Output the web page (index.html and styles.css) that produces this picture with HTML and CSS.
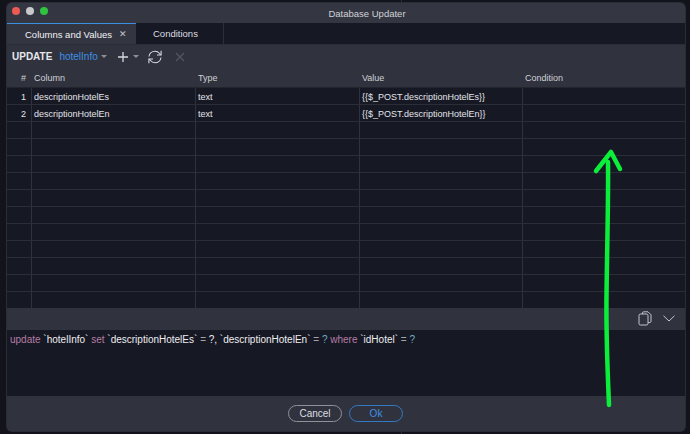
FILE: index.html
```html
<!DOCTYPE html>
<html lang="en">
<head>
    <meta charset="UTF-8">
    <meta name="viewport" content="width=device-width, initial-scale=1.0">
    <link rel="stylesheet" href="styles.css">
    <title>Database Updater</title>
</head>
<body>

<div class="window">
    <div class="titlebar">
        <div class="lights">
            <span class="light red"></span>
            <span class="light grey"></span>
            <span class="light green"></span>
        </div>
        Database Updater
    </div>

    <div class="tabs">
        <div class="tab active">Columns and Values <span class="tab-close">✕</span></div>
        <div class="tab">Conditions</div>
    </div>

    <div class="toolbar">
        <span class="update-label">UPDATE</span>
        <span class="table-name">hotelInfo</span>
        <span class="caret"></span>
        <svg class="tool-plus" width="12" height="12" viewBox="0 0 12 12"><path d="M6 1v10M1 6h10" stroke="#d8d9de" stroke-width="1.3" fill="none"/></svg>
        <span class="caret"></span>
        <svg class="tool-refresh" width="16" height="16" viewBox="0 0 16 16" fill="none" stroke="#d8d9de" stroke-width="1.1">
            <path d="M2 7.5C2.4 4.4 5 2.3 8 2.3c1.900 0 3.400.8 4.500 2.200l1.200 1.300"/>
            <path d="M14.100 1.800v4.200H10"/>
            <path d="M14 8.500c-.4 3.100-3 5.200-6 5.200-1.900 0-3.400-.8-4.500-2.200l-1.200-1.300"/>
            <path d="M1.900 14.200V10H6"/>
        </svg>
        <svg class="tool-delete" width="10" height="10" viewBox="0 0 10 10"><path d="M1 1l8 8M9 1l-8 8" stroke="#555761" stroke-width="1.100" fill="none"/></svg>
    </div>

    <div class="grid">
        <div class="row head">
            <div class="cell num">#</div><div class="cell">Column</div><div class="cell">Type</div><div class="cell">Value</div><div class="cell">Condition</div>
        </div>
        <div class="row">
            <div class="cell num">1</div><div class="cell">descriptionHotelEs</div><div class="cell">text</div><div class="cell">{{$_POST.descriptionHotelEs}}</div><div class="cell"></div>
        </div>
        <div class="row">
            <div class="cell num">2</div><div class="cell">descriptionHotelEn</div><div class="cell">text</div><div class="cell">{{$_POST.descriptionHotelEn}}</div><div class="cell"></div>
        </div>
        <div class="row"><div class="cell num"></div><div class="cell"></div><div class="cell"></div><div class="cell"></div><div class="cell"></div></div>
        <div class="row"><div class="cell num"></div><div class="cell"></div><div class="cell"></div><div class="cell"></div><div class="cell"></div></div>
        <div class="row"><div class="cell num"></div><div class="cell"></div><div class="cell"></div><div class="cell"></div><div class="cell"></div></div>
        <div class="row"><div class="cell num"></div><div class="cell"></div><div class="cell"></div><div class="cell"></div><div class="cell"></div></div>
        <div class="row"><div class="cell num"></div><div class="cell"></div><div class="cell"></div><div class="cell"></div><div class="cell"></div></div>
        <div class="row"><div class="cell num"></div><div class="cell"></div><div class="cell"></div><div class="cell"></div><div class="cell"></div></div>
        <div class="row"><div class="cell num"></div><div class="cell"></div><div class="cell"></div><div class="cell"></div><div class="cell"></div></div>
        <div class="row"><div class="cell num"></div><div class="cell"></div><div class="cell"></div><div class="cell"></div><div class="cell"></div></div>
        <div class="row"><div class="cell num"></div><div class="cell"></div><div class="cell"></div><div class="cell"></div><div class="cell"></div></div>
        <div class="row"><div class="cell num"></div><div class="cell"></div><div class="cell"></div><div class="cell"></div><div class="cell"></div></div>
        <div class="row last"><div class="cell num"></div><div class="cell"></div><div class="cell"></div><div class="cell"></div><div class="cell"></div></div>
    </div>

    <div class="editor-bar">
        <svg width="14" height="15" viewBox="0 0 14 15" fill="none" stroke="#c4c5cb" stroke-width="1">
            <path d="M4.500 3V2a1.200 1.200 0 0 1 1.200-1.200h4.300l3 3v6.500a1.200 1.200 0 0 1-1.200 1.200H10"/>
            <rect x="1" y="3" width="9" height="11" rx="1.500"/>
        </svg>
        <svg width="12" height="7" viewBox="0 0 12 7" fill="none" stroke="#c4c5cb" stroke-width="1"><path d="M.5.800L6 6l5.500-5.200"/></svg>
    </div>

    <div class="editor">
        <span class="kw">update</span> `hotelInfo` <span class="kw">set</span> `descriptionHotelEs` <span class="op">=</span> ?, `descriptionHotelEn` <span class="op">=</span> <span class="q">?</span> <span class="kw">where</span> `idHotel` <span class="op">=</span> <span class="q">?</span>
    </div>

    <div class="footer">
        <button class="btn">Cancel</button>
        <button class="btn btn-ok">Ok</button>
    </div>
</div>

<!-- arrow drawn over the screenshot -->
<svg class="arrow" width="690" height="434" viewBox="0 0 690 434" fill="none" stroke="#0bef3a" stroke-width="4.500" stroke-linecap="round" stroke-linejoin="round">
    <path d="M609 405C608 380 606 340 606.500 297C607 250 608.500 200 608 162"/>
    <path d="M596 171L611 152L620 169"/>
</svg>

</body>
</html>
```

FILE: styles.css
```css
body {
    margin: 0;
    height: 434px;
    overflow: hidden;
    background: linear-gradient(#2a2c36, #2a2c36) 401px 0 / 1px 100% no-repeat #12131b;
    font-family: "Liberation Sans", Arial, sans-serif;
    color: #e4e5ea;
}

.window {
    margin: 3px 5px 0 7px;
    height: 428px;
    display: flex;
    flex-direction: column;
    background-color: #30333e;
    border-radius: 5px;
    overflow: hidden;
    box-shadow: 0 0 0 1px #2b2d36;
}

.titlebar {
    height: 20px;
    padding-left: 42px;
    display: flex;
    align-items: center;
    justify-content: center;
    position: relative;
    font-size: 9.500px;
    color: #d0d1d6;
    background-color: #343742;
}

.lights {
    position: absolute;
    left: 5px;
    top: 4px;
    display: flex;
    gap: 6px;
}

.light {
    width: 8px;
    height: 8px;
    border-radius: 50%;
}

.red { background-color: #ee5a52; }
.grey { background-color: #c9c9cc; }
.green { background-color: #2fc33f; }

.tabs {
    height: 22px;
    display: flex;
    background-color: #161823;
    border-bottom: 1px solid #2a2c36;
    box-sizing: border-box;
}

.tab {
    width: 88px;
    display: flex;
    align-items: center;
    padding-left: 17px;
    box-sizing: border-box;
    font-size: 9.500px;
    color: #dcdde2;
    border-right: 1px solid #2d2f39;
}

.tab.active {
    width: 129px;
    gap: 7px;
    padding-left: 18px;
    color: #f2f2f5;
    background-color: #333641;
    border-top: 1px solid #3d8fe0;
    border-right: none;
}

.tab-close {
    font-size: 9px;
    color: #c5c6cc;
}

.toolbar {
    height: 23px;
    display: flex;
    align-items: center;
    padding-left: 5px;
    background-color: #30333e;
}

.update-label {
    font-size: 10px;
    font-weight: bold;
    color: #e6e7eb;
}

.table-name {
    margin-left: 7px;
    font-size: 10px;
    color: #3f8fe6;
}

.caret {
    width: 0;
    height: 0;
    margin-left: 3px;
    border-left: 3px solid transparent;
    border-right: 3px solid transparent;
    border-top: 3px solid #8d8f98;
}

.tool-plus { margin-left: 10px; }
.tool-plus + .caret { margin-left: 4px; }
.tool-refresh { margin-left: 8px; }
.tool-delete { margin-left: 12px; }

.grid {
    height: 240px;
    display: flex;
    flex-direction: column;
    background-color: #161823;
}

.row {
    height: 17px;
    display: grid;
    grid-template-columns: 24px 164px 164px 163px 1fr;
    box-sizing: border-box;
    border-bottom: 1px solid #2b2d37;
    font-size: 9px;
    color: #e4e5ea;
}

.row.head {
    height: 20px;
    background-color: #30333e;
    color: #cfd0d5;
    border-bottom: 1px solid #23252e;
}

.row.last {
    height: 16px;
    border-bottom: none;
}

.cell {
    display: flex;
    align-items: center;
    padding: 1px 0 0 2px;
    border-left: 1px solid #2f313b;
}

.cell:first-child { border-left: none; }

.cell.num {
    justify-content: flex-end;
    padding: 1px 5px 0 0;
}

.editor-bar {
    height: 22px;
    display: flex;
    align-items: center;
    justify-content: flex-end;
    gap: 11px;
    padding-right: 10px;
    background-color: #30333e;
}

.editor-bar svg { margin-bottom: 1px; }

.editor {
    height: 66px;
    padding: 3px 3px 0;
    box-sizing: border-box;
    font-size: 10px;
    line-height: 13px;
    white-space: nowrap;
    color: #eeeef1;
    background-color: #161823;
}

.kw { color: #b67da6; }
.op { color: #a2a3ab; }
.q { color: #6cb0c9; }

.footer {
    flex: 1;
    display: flex;
    align-items: center;
    padding: 0 0 0 281px;
    gap: 7px;
    background-color: #30333e;
}

.btn {
    width: 54px;
    height: 17px;
    padding: 0;
    font-family: inherit;
    font-size: 10px;
    color: #dcdde2;
    background-color: transparent;
    border: 1px solid #8f919a;
    border-radius: 9px;
}

.btn-ok {
    color: #3f8fe6;
    border-color: #3478c4;
}

.arrow {
    position: absolute;
    left: 0;
    top: 0;
}
```
